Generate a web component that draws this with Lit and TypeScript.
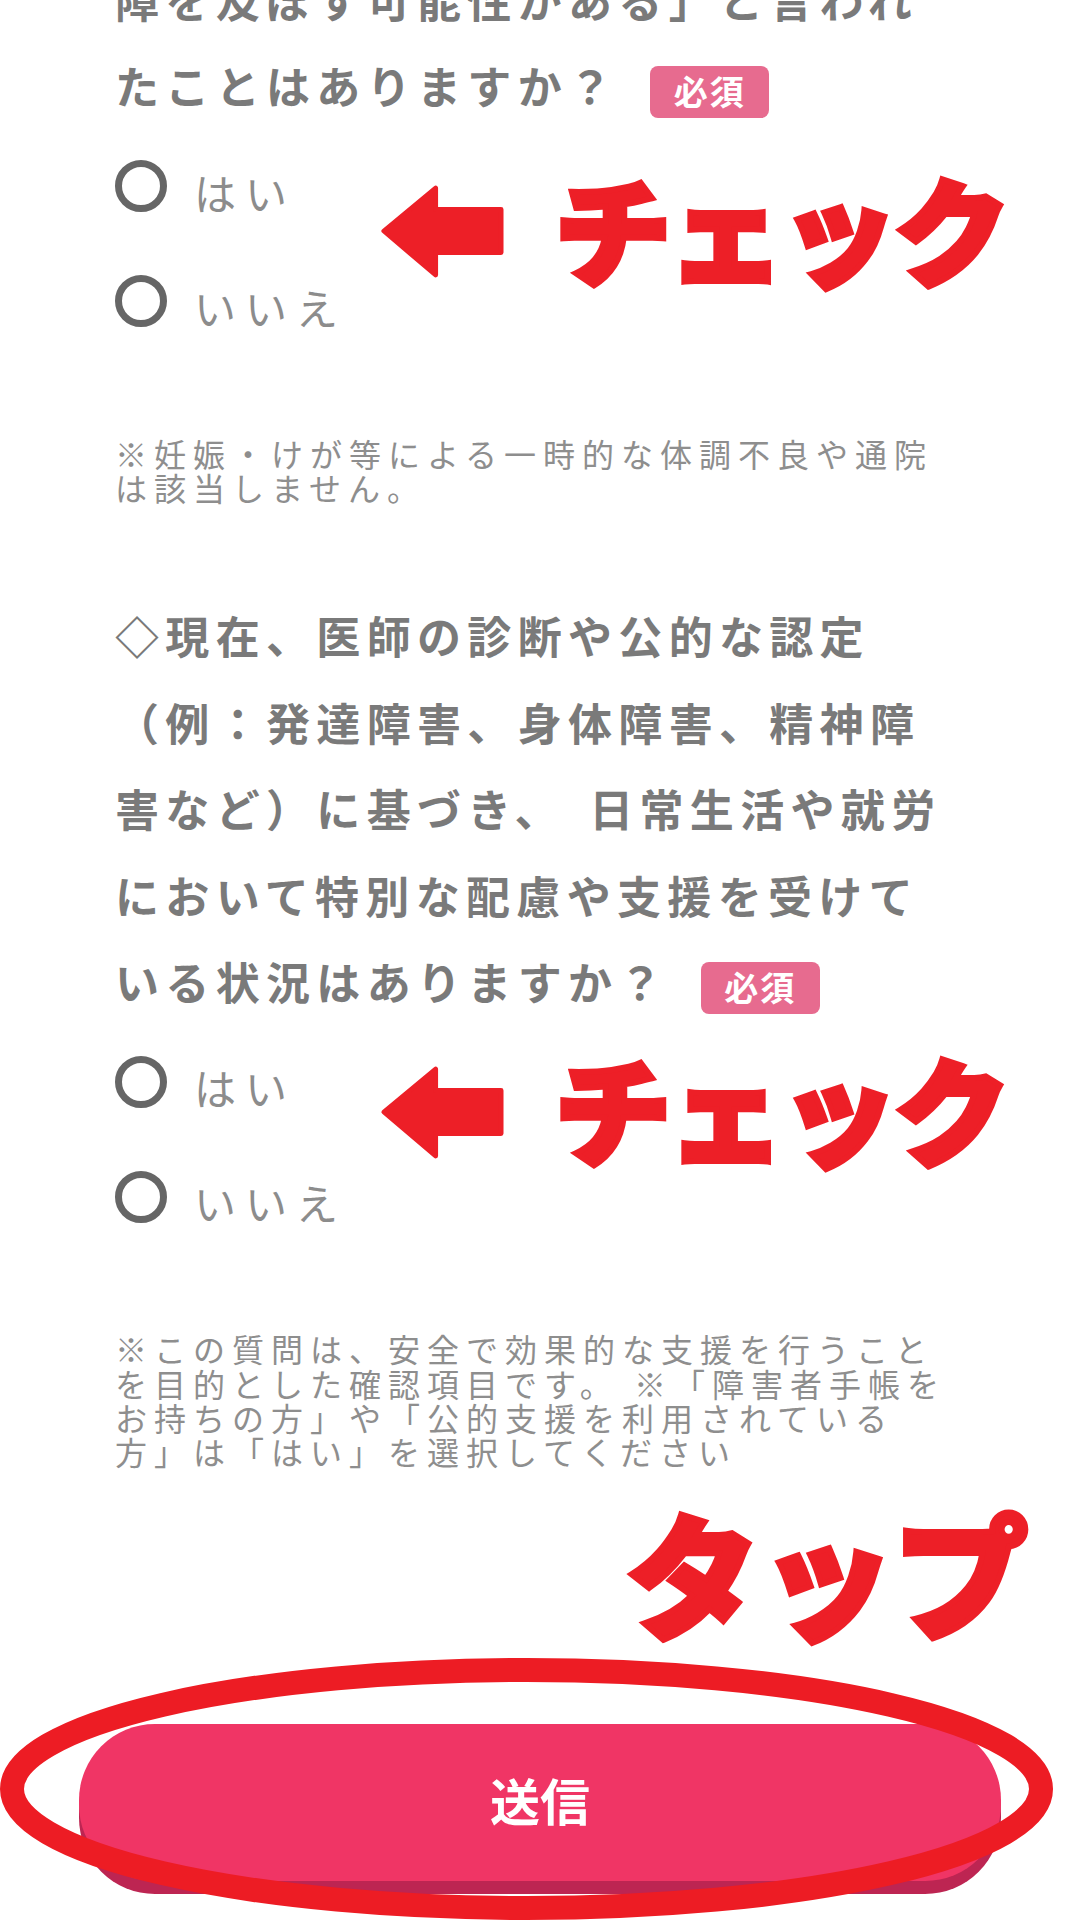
import { LitElement, html, css } from "lit";
import { customElement } from "lit/decorators.js";

@customElement("app-root")
export class AppRoot extends LitElement {
  static styles = css`
    :host {
      display: block;
      width: 1080px;
      height: 1920px;
      background: #fff;
      overflow: hidden;
      position: relative;
      font-family: "Noto Sans CJK JP", "Noto Sans", sans-serif;
    }
    .page { padding: 0 0 0 115px; margin-top: -44px; display: flex; flex-direction: column; }
    .q {
      margin: 0;
      font-size: 44px;
      line-height: 86.4px;
      letter-spacing: 6.33px;
      word-spacing: 8px;
      font-weight: 700;
      color: #7a7a7a;
      white-space: pre;
    }
    .badge {
      display: inline-block;
      width: 119px;
      height: 52px;
      margin-left: 32px;
      border-radius: 8px;
      background: #e76b8f;
      color: #fff;
      font-size: 34px;
      line-height: 50px;
      letter-spacing: 2px;
      text-align: center;
      vertical-align: middle;
      word-spacing: 0;
    }
    .radios { margin-top: 0; display: flex; flex-direction: column; }
    .row { height: 115px; display: flex; align-items: center; gap: 27px; }
    .dot { width: 52px; height: 52px; box-sizing: border-box; border: 7px solid #666; border-radius: 50%; flex: none; }
    .lab { font-size: 42px; letter-spacing: 9px; color: #8c8c8c; line-height: 1; padding-top: 11px; }
    .note {
      margin: 77px 0 0 0;
      font-size: 32px;
      line-height: 34.3px;
      letter-spacing: 7px;
      word-spacing: 1px;
      color: #8e8e8e;
      white-space: pre;
    }
    .gap2 { margin-top: 88px; }
    .note2 { margin-top: 77px; }
    .submit {
      margin: 255px 0 0 -36px;
      width: 922px;
      height: 157px;
      border: 0;
      padding: 0 0 6px 0;
      border-radius: 76px;
      background: #f03565;
      box-shadow: 0 13px 0 #bd2552;
      color: #fff;
      font: 700 50px/1 "Noto Sans CJK JP", sans-serif;
      display: flex;
      align-items: center;
      justify-content: center;
    }
    .arrow { position: absolute; left: 378px; width: 126px; height: 99px; }
    .arrow.a1 { top: 182px; }
    .arrow.a2 { top: 1063px; }
    .mark {
      position: absolute;
      color: #ed1f27;
      font-weight: 900;
      white-space: nowrap;
      line-height: 1;
      -webkit-text-stroke: 6px #ed1f27;
    }
    .check { left: 555px; font-size: 116px; letter-spacing: -3px; }
    .check.a1 { top: 168px; }
    .check.a2 { top: 1048px; }
    .tap { left: 626px; top: 1504px; font-size: 134px; letter-spacing: 0; }
    .ring { position: absolute; left: 0; top: 1650px; width: 1080px; height: 270px; overflow: visible; }
  `;

  private radios() {
    return html`<div class="radios">
      <div class="row"><span class="dot"></span><span class="lab">はい</span></div>
      <div class="row"><span class="dot"></span><span class="lab">いいえ</span></div>
    </div>`;
  }

  private arrow(cls: string) {
    return html`<svg class="arrow ${cls}" viewBox="0 0 129 99">
      <path d="M6 49 L59 5 V27 H126 V71 H59 V94 Z" fill="#ed1f27" stroke="#ed1f27" stroke-width="5" stroke-linejoin="round"/>
    </svg>`;
  }

  render() {
    return html`
      <div class="page">
        <p class="q">障を及ぼす可能性がある」と言われ
たことはありますか？<span class="badge">必須</span></p>
        ${this.radios()}
        <p class="note">※妊娠・けが等による一時的な体調不良や通院
は該当しません。</p>
        <p class="q gap2">◇現在、医師の診断や公的な認定
（例：発達障害、身体障害、精神障
害など）に基づき、 日常生活や就労
において特別な配慮や支援を受けて
いる状況はありますか？<span class="badge">必須</span></p>
        ${this.radios()}
        <p class="note note2">※この質問は、安全で効果的な支援を行うこと
を目的とした確認項目です。 ※「障害者手帳を
お持ちの方」や「公的支援を利用されている
方」は「はい」を選択してください</p>
        <button class="submit">送信</button>
      </div>
      ${this.arrow("a1")}
      <span class="mark check a1">チェック</span>
      ${this.arrow("a2")}
      <span class="mark check a2">チェック</span>
      <span class="mark tap">タップ</span>
      <svg class="ring" viewBox="0 0 1080 270">
        <ellipse cx="526.5" cy="139" rx="514.5" ry="119" fill="none" stroke="#ed1c24" stroke-width="24"/>
      </svg>
    `;
  }
}
